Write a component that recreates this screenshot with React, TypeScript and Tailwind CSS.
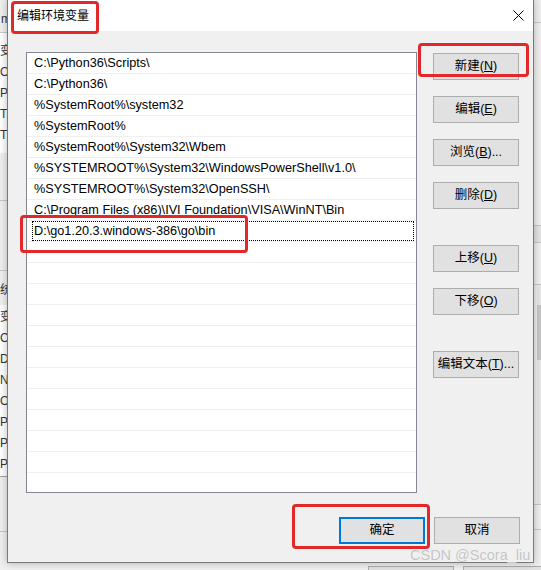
import { useState } from 'react'

const font = { fontFamily: '"Liberation Sans", "Noto Sans CJK SC", sans-serif' }

const paths = [
  'C:\\Python36\\Scripts\\',
  'C:\\Python36\\',
  '%SystemRoot%\\system32',
  '%SystemRoot%',
  '%SystemRoot%\\System32\\Wbem',
  '%SYSTEMROOT%\\System32\\WindowsPowerShell\\v1.0\\',
  '%SYSTEMROOT%\\System32\\OpenSSH\\',
  'C:\\Program Files (x86)\\IVI Foundation\\VISA\\WinNT\\Bin',
  'D:\\go1.20.3.windows-386\\go\\bin',
]

const backTop = ['变', 'On', 'Pa', 'TE', 'TM']
const backBottom = ['变', 'Co', 'Dr', 'NI', 'OS', 'Pa', 'PA', 'PR']

function Btn({ label, hot, tail = ')', primary = false, className = '' }: {
  label: string
  hot?: string
  tail?: string
  primary?: boolean
  className?: string
}) {
  return (
    <div
      className={`w-[86px] h-[27px] flex items-center justify-center bg-[#e1e1e1] text-[12.5px] text-black ${
        primary ? 'border-2 border-[#0078d7]' : 'border border-[#adadad]'
      } ${className}`}
    >
      {label}
      {hot && (
        <>
          (<span className="underline underline-offset-1">{hot}</span>
          {tail}
        </>
      )}
    </div>
  )
}

export default function App() {
  const [selected] = useState(8)
  const rows = Array.from({ length: 20 }, (_, i) => paths[i] ?? '')

  return (
    <div className="relative w-[541px] h-[570px] overflow-hidden bg-[#f0f0f0]" style={font}>
      {/* background window (left strip) */}
      <div className="absolute left-0 top-0 w-[7px] h-[570px] overflow-hidden text-[12px] text-[#333]">
        <div className="h-[33px] border-b border-[#c8c8c8] pt-[10px] pl-[1px]">m</div>
        <div className="bg-white h-[120px] pt-[8px]">
          {backTop.map((t, i) => (
            <div key={i} className="h-[21px] leading-[21px]">{t}</div>
          ))}
        </div>
        <div className="h-[48px] border-b border-[#c8c8c8]" />
        <div className="h-[70px] border-b border-[#c8c8c8]" />
        <div className="h-[34px] pt-[10px]">统</div>
        <div className="bg-white h-[172px] pt-[2px] border-b border-[#a0a0a0]">
          {backBottom.map((t, i) => (
            <div key={i} className="h-[21px] leading-[21px]">{t}</div>
          ))}
        </div>
        <div className="h-[55px] border-b border-[#c8c8c8]" />
      </div>

      {/* background window (right strip) */}
      <div className="absolute left-[533px] top-0 w-[8px] h-[570px] flex flex-col">
        <div className="h-[23px] border-b border-[#c8c8c8]" />
        <div className="h-[203px] border-b border-[#c8c8c8]" />
        <div className="h-[17px] border-b border-[#c8c8c8] bg-[#e4e4e4]" />
        <div className="h-[42px] border-b border-[#c8c8c8]" />
        <div className="h-[20px] flex justify-end">
          <div className="w-[4px] h-full bg-[#e8e8e8]" />
        </div>
        <div className="h-[55px] flex justify-end">
          <div className="w-[4px] h-full bg-[#c8c8c8]" />
        </div>
        <div className="h-[145px] border-b border-[#c8c8c8] flex justify-end">
          <div className="w-[4px] h-full bg-[#e8e8e8]" />
        </div>
        <div className="h-[25px] border-b border-[#c8c8c8]" />
      </div>

      {/* background window buttons under dialog */}
      <div className="absolute left-[368px] top-[566px] w-[86px] h-[20px] border border-[#adadad] bg-[#e1e1e1]" />
      <div className="absolute left-[463px] top-[566px] w-[86px] h-[20px] border border-[#adadad] bg-[#e1e1e1]" />

      {/* dialog */}
      <div className="absolute left-[7px] top-[-1px] w-[527px] h-[564px] flex flex-col bg-[#f0f0f0] border border-[#7a7a7a] shadow-[0_0_8px_rgba(0,0,0,0.28)]">
        <div className="h-[31px] shrink-0 bg-white flex items-center justify-between pl-[9px] pr-[9px]">
          <span className="text-[12px] text-black">编辑环境变量</span>
          <svg width="11" height="11" viewBox="0 0 11 11" className="text-black">
            <path d="M0.5 0.5 L10.5 10.5 M10.5 0.5 L0.5 10.5" stroke="currentColor" strokeWidth="1" />
          </svg>
        </div>

        <div className="flex pl-[18px] pt-[21px]">
          <div className="w-[391px] h-[441px] bg-white border border-[#828790] overflow-hidden">
            {rows.map((p, i) => (
              <div key={i} className="h-[21px] border-b border-[#f0f0f0] pl-[5px] pr-[2px]">
                <div
                  className={`h-[20px] flex items-center pl-[2px] pt-[2px] text-[12.7px] text-black whitespace-nowrap overflow-hidden ${
                    i === selected ? 'outline outline-1 outline-dotted outline-black -outline-offset-1' : ''
                  }`}
                >
                  {p}
                </div>
              </div>
            ))}
          </div>

          <div className="ml-[16px] mt-[1px] flex flex-col">
            <Btn label="新建" hot="N" />
            <Btn label="编辑" hot="E" className="mt-[16px]" />
            <Btn label="浏览" hot="B" tail=")..." className="mt-[16px]" />
            <Btn label="删除" hot="D" className="mt-[16px]" />
            <Btn label="上移" hot="U" className="mt-[36px]" />
            <Btn label="下移" hot="O" className="mt-[16px]" />
            <Btn label="编辑文本" hot="T" tail=")..." className="mt-[36px]" />
          </div>
        </div>

        <div className="flex justify-end gap-[9px] mt-[24px] pr-[13px]">
          <Btn label="确定" primary />
          <Btn label="取消" />
        </div>
      </div>

      {/* red annotation boxes */}
      <div className="absolute left-[11px] top-[1px] w-[88px] h-[33px] border-[3px] border-[#e3282b] rounded-[4px]" />
      <div className="absolute left-[418px] top-[43px] w-[111px] h-[34px] border-[3px] border-[#e3282b] rounded-[4px]" />
      <div className="absolute left-[20px] top-[215px] w-[228px] h-[38px] border-[3px] border-[#e3282b] rounded-[4px]" />
      <div className="absolute left-[292px] top-[504px] w-[138px] h-[45px] border-[3px] border-[#e3282b] rounded-[4px]" />

      {/* watermark */}
      <div className="absolute left-[410px] top-[545px] text-[14.5px] text-[#c4c4c4] [text-shadow:0_0_1px_rgba(255,255,255,0.9)]">
        CSDN @Scora_liu
      </div>
    </div>
  )
}
